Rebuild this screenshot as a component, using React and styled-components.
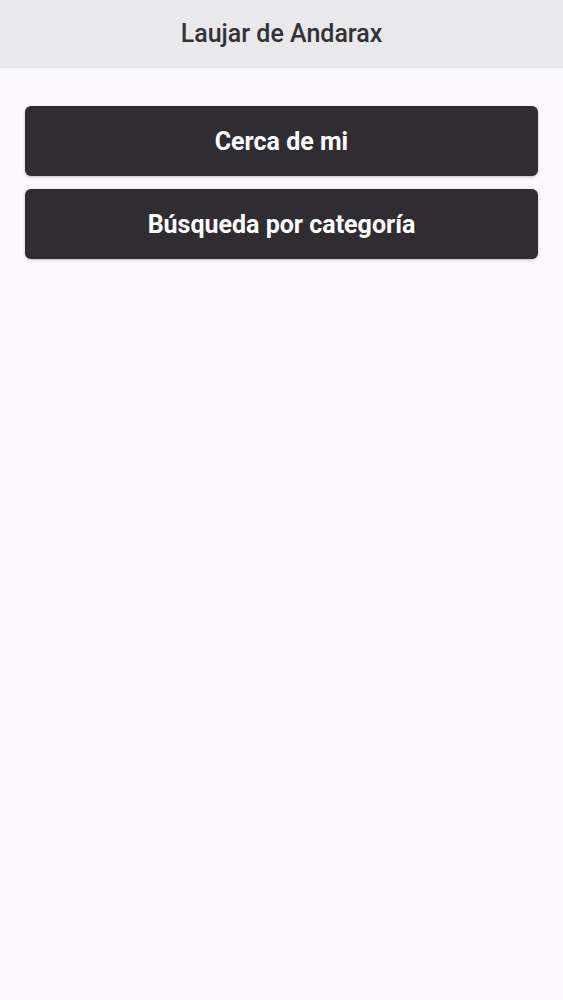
import React from 'react';
import styled, { createGlobalStyle } from 'styled-components';

const GlobalStyle = createGlobalStyle`
  html, body {
    margin: 0;
    padding: 0;
    background: #fbf9fb;
    font-family: Roboto, "Liberation Sans", sans-serif;
  }
`;

const Page = styled.div`
  min-height: 1000px;
  background: #fbf9fb;
`;

const Header = styled.header`
  height: 68px;
  display: flex;
  align-items: center;
  justify-content: center;
  background: #e9e8ea;
  border-bottom: 1px solid #e2e1e3;
  box-sizing: border-box;
`;

const Title = styled.h1`
  margin: 0;
  font-size: 25px;
  font-weight: 500;
  color: #333236;
`;

const Menu = styled.nav`
  display: flex;
  flex-direction: column;
  gap: 13px;
  padding: 38px 25px 0;
`;

const MenuButton = styled.button`
  height: 70px;
  border: none;
  border-radius: 6px;
  background: #2f2d31;
  color: #ffffff;
  font-family: Roboto, "Liberation Sans", sans-serif;
  font-size: 25px;
  font-weight: 700;
  box-shadow: 0 1px 3px rgba(0, 0, 0, 0.25);
  cursor: pointer;
`;

const App = () => (
  <>
    <GlobalStyle />
    <Page>
      <Header>
        <Title>Laujar de Andarax</Title>
      </Header>
      <Menu>
        <MenuButton>Cerca de mi</MenuButton>
        <MenuButton>Búsqueda por categoría</MenuButton>
      </Menu>
    </Page>
  </>
);

export default App;
